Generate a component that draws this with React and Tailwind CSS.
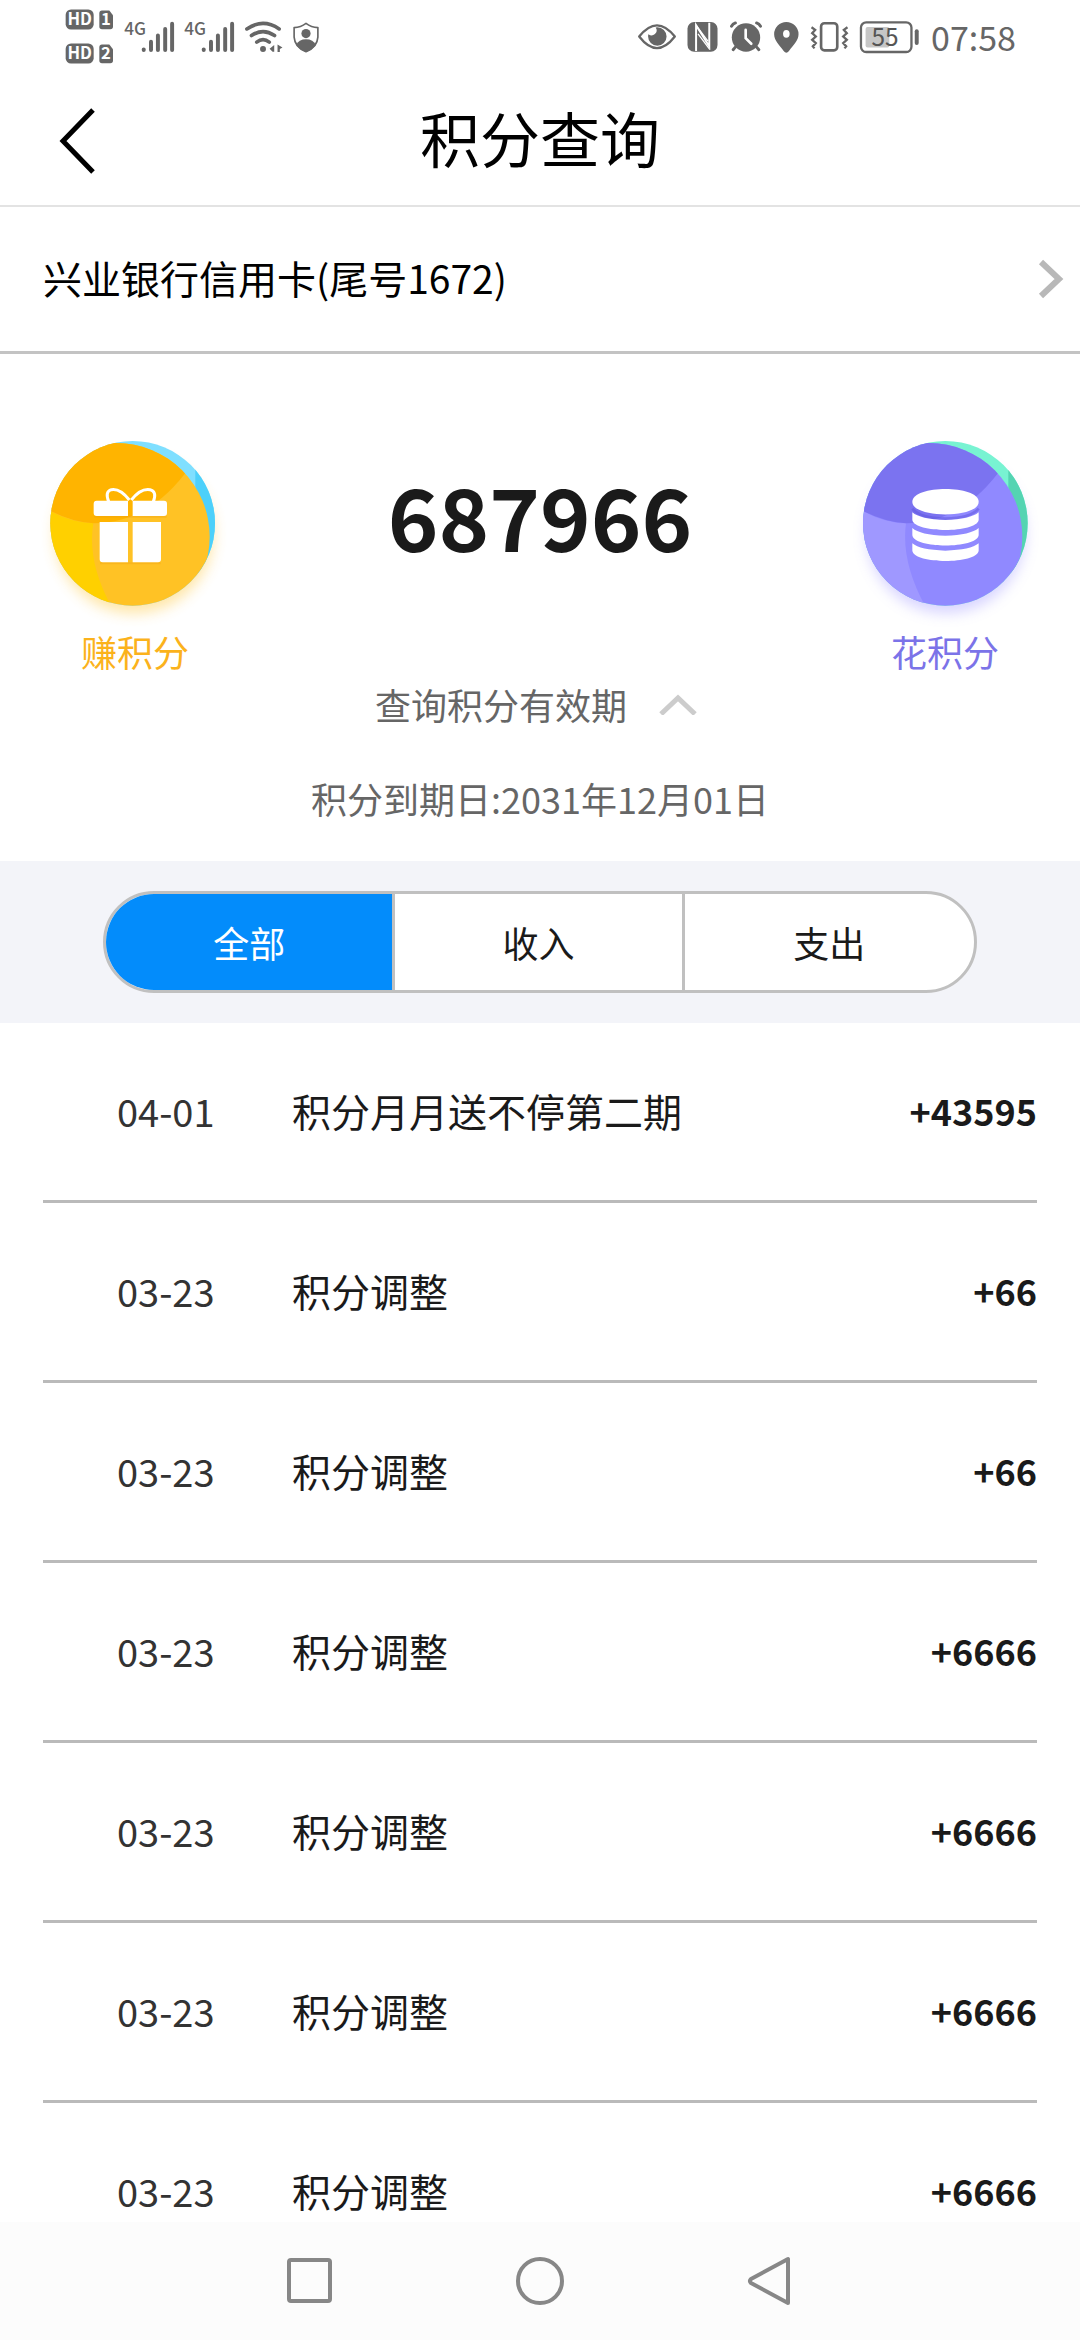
import React, { useState } from 'react';

const records = [
  { id: 1, date: '04-01', title: '积分月月送不停第二期', amount: '+43595' },
  { id: 2, date: '03-23', title: '积分调整', amount: '+66' },
  { id: 3, date: '03-23', title: '积分调整', amount: '+66' },
  { id: 4, date: '03-23', title: '积分调整', amount: '+6666' },
  { id: 5, date: '03-23', title: '积分调整', amount: '+6666' },
  { id: 6, date: '03-23', title: '积分调整', amount: '+6666' },
  { id: 7, date: '03-23', title: '积分调整', amount: '+6666' },
];

const tabs = ['全部', '收入', '支出'];

const HdBadge = ({ sim }) => (
  <svg viewBox="75 30 147 62" className="w-[49px] h-[21px] overflow-visible" fill="#666">
    <rect x="77" y="31" width="84" height="60" rx="16" />
    <path d="M186 34h22l11 14v34a8 8 0 0 1-8 8h-25a8 8 0 0 1-8-8V42a8 8 0 0 1 8-8z" />
    <text x="119" y="79" textAnchor="middle" fontSize="50" fontWeight="700" fill="#fff">HD</text>
    <text x="198" y="79" textAnchor="middle" fontSize="50" fontWeight="700" fill="#fff">{sim}</text>
  </svg>
);

const Signal = () => (
  <svg viewBox="252 60 156 100" className="w-[52px] h-[33px] overflow-visible" stroke="#666" strokeWidth="12" strokeLinecap="round">
    <text x="252" y="106" fontSize="52" fontWeight="500" fill="#666" stroke="none">4G</text>
    <path d="M311 149v2M333 126v25M354 107v44M376 87v64M397 71v80" />
  </svg>
);

const Wifi = () => (
  <svg viewBox="612 60 120 100" className="w-10 h-[33px]" fill="none" stroke="#666" strokeWidth="11" strokeLinecap="round">
    <path d="M620 87Q669 54 718 87M634 107Q669 83 704 107M650 127Q669 112 688 127" />
    <circle cx="669" cy="148" r="9" fill="#666" stroke="none" />
    <path d="M703 136v20h-5l-9-9zM713 134l15 9-8 5v9h-7z" fill="#666" stroke="none" />
  </svg>
);

const Shield = () => (
  <svg viewBox="756 60 84 100" className="w-7 h-[33px]" fill="none" stroke="#666" strokeWidth="5">
    <path d="M798 70Q814 82 834 83V112Q832 143 798 156Q764 143 762 112V83Q782 82 798 70z" strokeLinejoin="round" />
    <circle cx="798" cy="101" r="14" fill="#666" stroke="none" />
    <path d="M768 135Q776 118 798 118Q820 118 828 135Q818 150 798 157Q778 150 768 135z" fill="#666" stroke="none" />
  </svg>
);

const Eye = () => (
  <svg viewBox="45 60 120 100" className="w-10 h-[33px]" fill="none" stroke="#666" strokeWidth="7">
    <path d="M51 110Q78 76 105 76Q132 76 159 110Q132 145 105 145Q78 145 51 110z" strokeLinejoin="round" />
    <path d="M106 82a28 28 0 1 1-28 28q0-4 1-7a15 15 0 0 0 22-20q2-1 5-1z" fill="#666" stroke="none" />
  </svg>
);

const Nfc = () => (
  <svg viewBox="195 60 96 100" className="w-8 h-[33px]" fill="none" stroke="#fff" strokeWidth="6">
    <rect x="196" y="66" width="91" height="90" rx="20" fill="#666" stroke="none" />
    <path d="M222 154V76L262 140V68" />
    <path d="M228 102L264 150" strokeWidth="4" />
    <path d="M222 76L258 124" strokeWidth="4" />
  </svg>
);

const Alarm = () => (
  <svg viewBox="318 60 102 100" className="w-[34px] h-[33px]" fill="none" stroke="#666" strokeWidth="9" strokeLinecap="round">
    <circle cx="369" cy="113" r="43" fill="#666" stroke="none" />
    <path d="M325 79Q329 72 337 69M401 69Q409 72 413 79M336 143l-6 7M402 143l6 7" />
    <path d="M368 90v25l17 17" stroke="#fff" strokeWidth="8" />
  </svg>
);

const Pin = () => (
  <svg viewBox="453 60 81 100" className="w-[27px] h-[33px]">
    <path d="M493 66a37 37 0 0 1 37 37c0 20-16 32-29 51q-8 10-16 0c-13-19-29-31-29-51a37 37 0 0 1 37-37z" fill="#666" />
    <ellipse cx="493" cy="102" rx="10" ry="12" fill="#fff" />
  </svg>
);

const Vibrate = () => (
  <svg viewBox="567 60 117 100" className="w-[39px] h-[33px]" fill="none" stroke="#666" strokeWidth="8">
    <rect x="600" y="70" width="49" height="82" rx="10" />
    <path d="M571 82l11 8-9 10 11 10-11 10 11 10-9 10 5 6M680 82l-11 8 9 10-11 10 11 10-11 10 9 10-5 6" strokeWidth="7" />
  </svg>
);

const Battery = () => (
  <svg viewBox="714 60 186 100" className="w-[62px] h-[33px] overflow-visible">
    <rect x="719" y="67" width="153" height="90" rx="16" fill="none" stroke="#666" strokeWidth="7" />
    <rect x="733" y="81" width="72" height="62" rx="6" fill="#c6c6c6" />
    <rect x="882" y="88" width="12" height="48" rx="6" fill="#666" />
    <text x="792" y="139" textAnchor="middle" fontSize="74" fill="#555">55</text>
  </svg>
);

const StatusBar = () => (
  <div className="flex items-center justify-between h-19 pb-[3px] pl-[65px] pr-[64px]">
    <div className="flex items-center gap-2">
      <div className="flex flex-col gap-[13px] w-[51px]">
        <HdBadge sim="1" />
        <HdBadge sim="2" />
      </div>
      <Signal />
      <Signal />
      <Wifi />
      <Shield />
    </div>
    <div className="flex items-center gap-[10px]">
      <Eye />
      <Nfc />
      <Alarm />
      <Pin />
      <Vibrate />
      <Battery />
      <span className="text-[34px] leading-10 text-[#666]">07:58</span>
    </div>
  </div>
);

const GiftIcon = () => (
  <svg viewBox="-15 30 660 600" className="w-[220px] h-[200px] overflow-visible">
    <defs>
      <clipPath id="gift-disc"><circle cx="308" cy="310" r="247" /></clipPath>
      <clipPath id="gift-front"><circle cx="258" cy="350" r="281" /></clipPath>
      <filter id="gift-shadow" x="-30%" y="-30%" width="160%" height="160%"><feGaussianBlur stdDeviation="20" /></filter>
    </defs>
    <circle cx="312" cy="342" r="238" fill="#ffc83c" opacity="0.45" filter="url(#gift-shadow)" />
    <g clipPath="url(#gift-disc)">
      <rect x="60" y="60" width="500" height="500" fill="#7fdfff" />
      <path d="M496 60h80v400h-80z" fill="#4dd0fa" />
      <g clipPath="url(#gift-front)">
        <rect x="-30" y="60" width="600" height="600" fill="#ffc225" />
        <path d="M40 262Q120 310 190 310Q170 430 250 570H40z" fill="#ffd000" />
        <path d="M40 40H480V140Q360 310 190 310Q120 306 40 262z" fill="#ffb400" />
      </g>
    </g>
    <path d="M192 290h218M210 430h182" stroke="#f0a010" strokeWidth="6" opacity="0.35" />
    <path d="M298 240Q270 204 244 209Q224 215 236 245M304 240Q332 204 360 209Q382 215 370 245" fill="none" stroke="#fff" strokeWidth="9" />
    <path d="M200 242h94v46h-94q-9 0-9-9v-28q0-9 9-9zM308 242h94q9 0 9 9v28q0 9-9 9h-94zM209 306h85v121h-76q-9 0-9-9zM308 306h85v112q0 9-9 9h-76z" fill="#fff" />
  </svg>
);

const CoinsIcon = () => (
  <svg viewBox="-15 30 660 600" className="w-[220px] h-[200px] overflow-visible">
    <defs>
      <clipPath id="coin-disc"><circle cx="316" cy="310" r="247" /></clipPath>
      <clipPath id="coin-front"><circle cx="266" cy="350" r="281" /></clipPath>
      <filter id="coin-shadow" x="-30%" y="-30%" width="160%" height="160%"><feGaussianBlur stdDeviation="20" /></filter>
    </defs>
    <circle cx="318" cy="342" r="238" fill="#9d94ff" opacity="0.4" filter="url(#coin-shadow)" />
    <g clipPath="url(#coin-disc)">
      <rect x="60" y="60" width="510" height="500" fill="#78f3d2" />
      <path d="M505 60h80v400h-80z" fill="#54d4b2" />
      <g clipPath="url(#coin-front)">
        <rect x="-30" y="60" width="610" height="600" fill="#9089ff" />
        <path d="M48 262Q128 310 198 310Q182 430 262 570H48z" fill="#9f98ff" />
        <path d="M48 40H488V140Q368 310 198 310Q128 306 48 262z" fill="#7b73f0" />
      </g>
    </g>
    <path d="M217 266Q240 294 316 296Q392 294 416 266" fill="none" stroke="#5e55dc" strokeWidth="8" opacity="0.5" />
    <g fill="#fff">
      <path d="M217 245C217 194 416 194 416 245C416 296 217 296 217 245z" />
      <path d="M217 277Q240 298 316 300Q392 298 416 277V300C410 340 223 340 217 300z" />
      <path d="M217 324Q240 345 316 347Q392 345 416 324V346C410 387 223 387 217 346z" />
      <path d="M217 370Q240 390 316 392Q392 390 416 370V392C410 433 223 433 217 392z" />
    </g>
  </svg>
);

const Summary = () => {
  const [open, setOpen] = useState(true);

  return (
    <section className="pt-[76px] pb-[33px]">
      <div className="flex justify-between px-[25px]">
        <button type="button" className="flex flex-col items-center text-[36px] leading-[42px] text-[#fbb21c]">
          <GiftIcon />
          赚积分
        </button>
        <div className="flex items-center h-[168px] text-[86px] font-bold text-[#1a1a1a]">687966</div>
        <button type="button" className="flex flex-col items-center text-[36px] leading-[42px] text-[#7b73e8]">
          <CoinsIcon />
          花积分
        </button>
      </div>
      <button
        type="button"
        onClick={() => setOpen(!open)}
        className="flex items-center justify-center gap-8 w-full h-16 pr-2 text-[36px] text-[#666]"
      >
        查询积分有效期
        <svg viewBox="0 0 38 22" className="w-[38px] h-[22px]" fill="none" stroke="#ccc" strokeWidth="5">
          <path d={open ? 'M2 21L19 5l17 16' : 'M2 2l17 16L36 2'} />
        </svg>
      </button>
      {open && <p className="mt-8 text-center text-[36px] leading-[60px] text-[#666]">积分到期日:2031年12月01日</p>}
    </section>
  );
};

const NavBar = () => (
  <nav className="flex shrink-0 items-center justify-center gap-[170px] h-[118px] bg-[#fcfcfc]">
    <button type="button" aria-label="最近任务">
      <svg viewBox="0 0 60 60" className="size-[60px]" fill="none" stroke="#878787" strokeWidth="4">
        <rect x="9" y="9" width="41" height="41" rx="2" />
      </svg>
    </button>
    <button type="button" aria-label="主屏幕">
      <svg viewBox="0 0 60 60" className="size-[60px]" fill="none" stroke="#878787" strokeWidth="4">
        <circle cx="30" cy="30" r="22" />
      </svg>
    </button>
    <button type="button" aria-label="返回桌面">
      <svg viewBox="0 0 60 60" className="size-[60px]" fill="none" stroke="#878787" strokeWidth="4" strokeLinejoin="round">
        <path d="M48 8v44L11 32q-2-2 0-4z" />
      </svg>
    </button>
  </nav>
);

const App = () => {
  const [active, setActive] = useState('全部');

  return (
    <div className="flex flex-col h-screen bg-white font-['Noto_Sans_CJK_SC',sans-serif]">
      <StatusBar />

      <header className="grid grid-cols-[1fr_auto_1fr] items-center h-[131px] border-b-2 border-[#e3e3e3] text-black">
        <button type="button" aria-label="返回" className="justify-self-start pl-[58px]">
          <svg viewBox="0 0 38 66" className="w-[38px] h-[66px]" fill="none" stroke="#000" strokeWidth="5">
            <path d="M35 2L5 33l30 31" />
          </svg>
        </button>
        <h1 className="text-[60px] leading-[88px] pb-2">积分查询</h1>
      </header>

      <button type="button" className="flex items-center justify-between h-[147px] pl-[43px] pr-4 border-b-3 border-[#c3c3c3] text-black">
        <span className="pb-1 text-[39px]">兴业银行信用卡(尾号1672)</span>
        <svg viewBox="0 0 26 40" className="w-[26px] h-10" fill="none" stroke="#b8b8b8" strokeWidth="6">
          <path d="M3 3l18 17L3 37" />
        </svg>
      </button>

      <Summary />

      <div className="bg-[#f3f4f9] px-[103px] py-[30px]">
        <div role="tablist" className="grid grid-cols-3 h-[102px] overflow-hidden rounded-full border-3 border-[#c0c0c0] bg-white divide-x-3 divide-[#c0c0c0] text-[36px]">
          {tabs.map((tab) => (
            <button
              key={tab}
              type="button"
              role="tab"
              aria-selected={active === tab}
              onClick={() => setActive(tab)}
              className={active === tab ? 'bg-[#038cfb] text-white' : 'text-[#1a1a1a]'}
            >
              {tab}
            </button>
          ))}
        </div>
      </div>

      <ul className="flex-1 min-h-0 overflow-hidden px-[43px]">
        {records.map((record) => (
          <li key={record.id} className="flex items-center h-[180px] pl-[74px] pb-[3px] border-b-3 border-[#bababa] text-[#1a1a1a]">
            <span className="w-[175px] text-[38px] text-[#333]">{record.date}</span>
            <span className="flex-1 text-[39px]">{record.title}</span>
            <span className="text-[36px] font-bold">{record.amount}</span>
          </li>
        ))}
      </ul>

      <NavBar />
    </div>
  );
};

export default App;
